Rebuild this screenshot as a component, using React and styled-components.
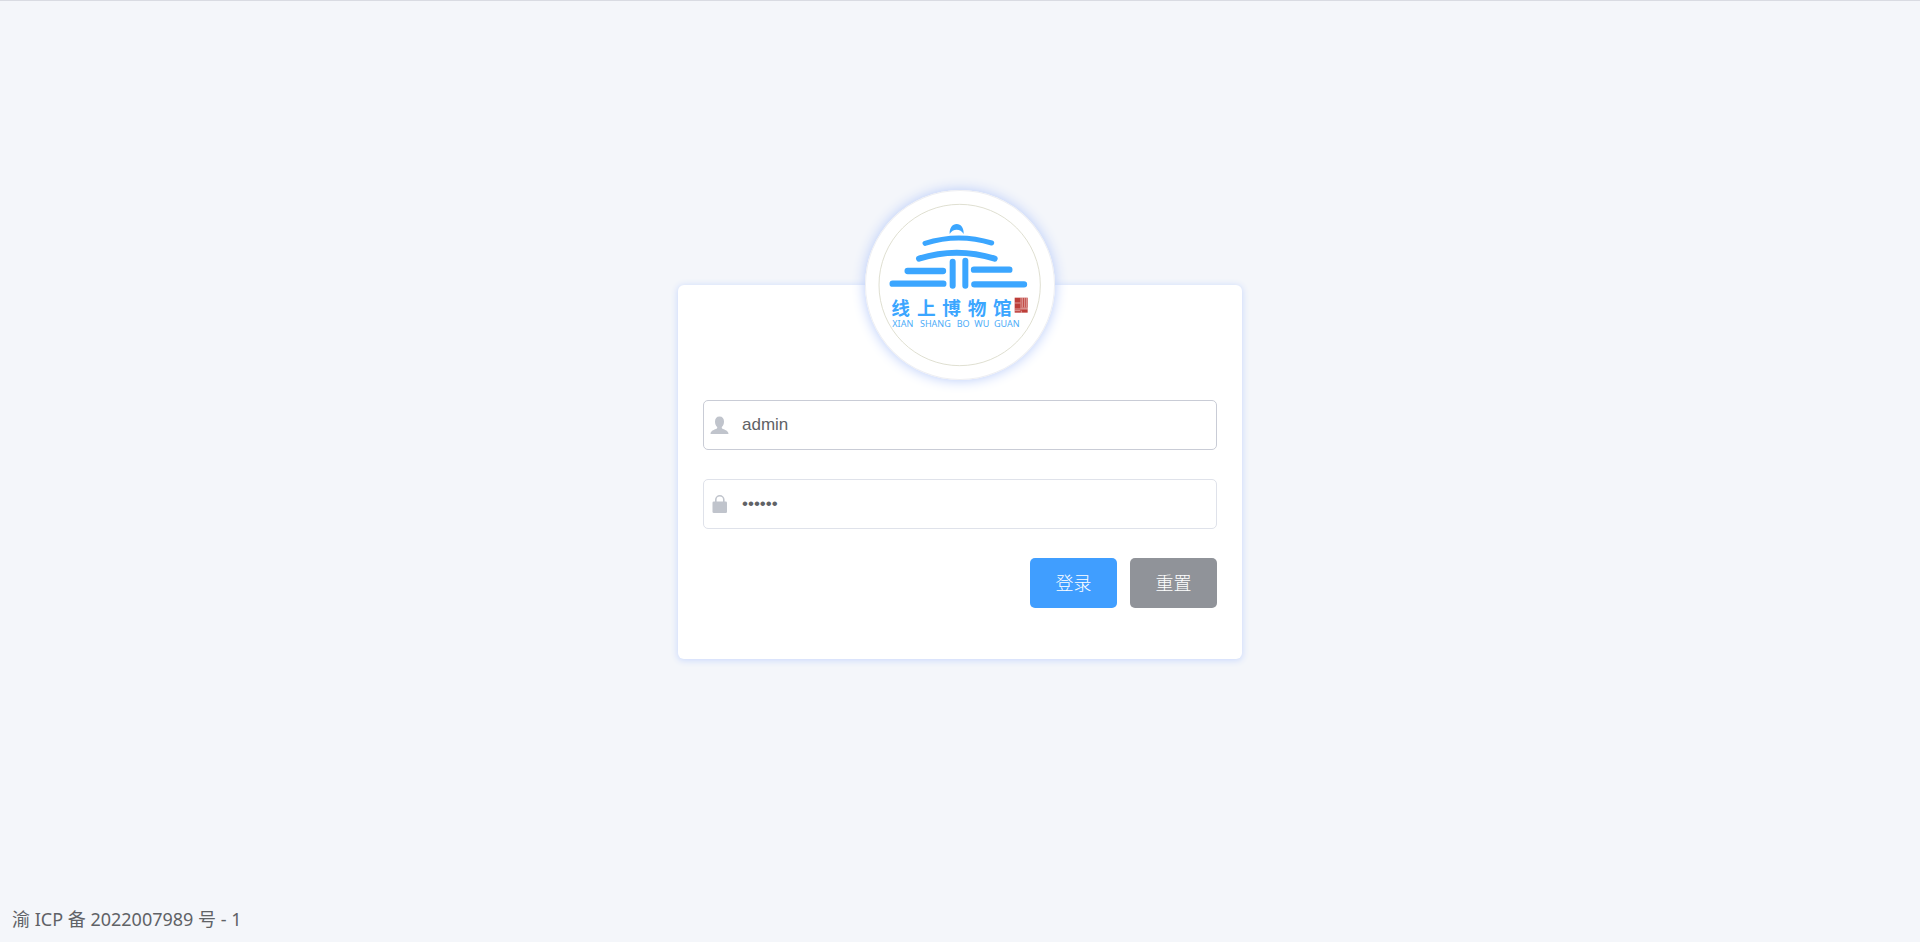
import React, { useState } from 'react';
import styled, { createGlobalStyle } from 'styled-components';

const GlobalStyle = createGlobalStyle`
  *, *::before, *::after { box-sizing: border-box; }
  body {
    margin: 0;
    background: #f4f6fa;
    color: #606266;
    font-family: "Noto Sans", "Noto Sans CJK SC", sans-serif;
    font-size: 18px;
  }
`;

const Page = styled.div`
  display: grid;
  grid-template-rows: 1fr auto 1fr;
  justify-items: center;
  min-height: 100vh;
  border-top: 1px solid #d9dbe2;
`;

const Card = styled.main`
  grid-row: 2;
  display: flex;
  flex-direction: column;
  width: 564px;
  max-width: 100%;
  padding: 0 25px 51px;
  border-radius: 6px;
  background: #fff;
  box-shadow: 0 1px 6px 1px #cfdcfc;
`;

const Avatar = styled.div`
  align-self: center;
  width: 190px;
  height: 190px;
  margin: -95px 0 20px;
  border-radius: 50%;
  background: #fff;
  box-shadow: 0 0 0 1px #eeeff3 inset, 0 0 13px #b5c9fa;
`;

const Logo = styled.svg`
  display: block;
  width: 100%;
  height: 100%;
`;

const LogoTitle = styled.text`
  fill: #3ba6ff;
  font: 700 56px "Noto Sans CJK SC", sans-serif;
`;

const LogoPinyin = styled.text`
  fill: #4dacf8;
  font: 400 27px "Noto Sans", sans-serif;
`;

const Form = styled.form`
  display: flex;
  flex-direction: column;
  gap: 29px;
`;

const Field = styled.label`
  display: flex;
  align-items: center;
  gap: 13px;
  height: 50px;
  padding: 0 6px;
  border: 1px solid ${({ $active }) => ($active ? '#c9ccd6' : '#dfe2ea')};
  border-radius: 5px;
  background: #fff;
`;

const FieldIcon = styled.svg`
  flex: none;
  width: 19px;
  height: 20px;
  fill: #c0c4cc;
`;

const Input = styled.input`
  flex: 1;
  min-width: 0;
  height: 100%;
  padding: 1px 0 0;
  border: 0;
  outline: 0;
  background: transparent;
  color: #606266;
  font: 17px "Liberation Sans", Arial, sans-serif;
`;

const Actions = styled.div`
  display: flex;
  justify-content: flex-end;
  gap: 13px;
`;

const Button = styled.button`
  width: 87px;
  height: 50px;
  padding: 0 0 2px;
  border: 0;
  border-radius: 5px;
  background: ${({ $tone }) => ($tone === 'primary' ? '#409eff' : '#909399')};
  color: #fff;
  font: 300 18px "Noto Sans CJK SC", sans-serif;
  cursor: pointer;
`;

const Footer = styled.footer`
  grid-row: 3;
  place-self: end start;
  padding: 0 12px 10px;
  line-height: 26px;
`;

const titleGlyphs = [
  ['线', 125],
  ['上', 202],
  ['博', 278],
  ['物', 354],
  ['馆', 430],
];

const pinyinWords = [
  ['XIAN', 128],
  ['SHANG', 211],
  ['BO', 321],
  ['WU', 374],
  ['GUAN', 433],
];

function MuseumLogo() {
  return (
    <Logo viewBox="46 43 570 570" role="img" aria-label="线上博物馆">
      <circle cx="330" cy="328" r="242" fill="none" stroke="#d8d9c8" strokeWidth="2.5" />
      <path d="M300 175 C299 157 308 145 321 145 C334 145 343 157 342 175 C333 158 309 158 300 175Z" fill="#3ba6ff" />
      <g fill="none" stroke="#3ba6ff" strokeLinecap="round">
        <path d="M226 203 Q326 171 426 202" strokeWidth="15" />
        <path d="M208 249 Q321 213 435 249" strokeWidth="18" />
        <path d="M309 258V330M347 255V330" strokeWidth="18" />
        <path d="M174 286H280M129 324H281M373 282H479M374 326H523" strokeWidth="19" />
      </g>
      {titleGlyphs.map(([glyph, x]) => (
        <LogoTitle key={glyph} x={x} y="417">{glyph}</LogoTitle>
      ))}
      {pinyinWords.map(([word, x]) => (
        <LogoPinyin key={word} x={x} y="455">{word}</LogoPinyin>
      ))}
      <path d="M495 366H534V411H495Z" fill="#bd3e39" />
      <path
        d="M514 366V399M495 382H512M495 400H534M495 405H512M519 366V395M525 366V395M530 366V395M516 397H534M515 405V411"
        fill="none"
        stroke="#fff"
        strokeWidth="1.500"
      />
    </Logo>
  );
}

export default function App() {
  const [username, setUsername] = useState('admin');
  const [password, setPassword] = useState('123456');

  const reset = () => {
    setUsername('admin');
    setPassword('123456');
  };

  return (
    <>
      <GlobalStyle />
      <Page>
        <Card>
          <Avatar>
            <MuseumLogo />
          </Avatar>
          <Form onSubmit={(event) => event.preventDefault()}>
            <Field $active>
              <FieldIcon viewBox="0 0 19 20" aria-hidden="true">
                <path d="M9.5 1.5C12.5 1.5 14 3.500 14 6.500C14 9 13.200 10.700 11.800 12V13C12 14.500 18.500 14.500 18.500 19H.5C.5 14.500 7 14.500 7.200 13V12C5.800 10.700 5 9 5 6.500C5 3.500 6.500 1.500 9.500 1.500Z" />
              </FieldIcon>
              <Input
                type="text"
                aria-label="用户名"
                autoComplete="username"
                value={username}
                onChange={(event) => setUsername(event.target.value)}
              />
            </Field>
            <Field>
              <FieldIcon viewBox="0 0 19 20" aria-hidden="true">
                <path d="M5.800 8.500V5.800A4 4 0 0 1 13.800 5.800V8.500" fill="none" stroke="#c0c4cc" strokeWidth="1.600" />
                <rect x="2.500" y="7.500" width="14.500" height="11.500" rx="1.300" />
              </FieldIcon>
              <Input
                type="password"
                aria-label="密码"
                autoComplete="current-password"
                value={password}
                onChange={(event) => setPassword(event.target.value)}
              />
            </Field>
            <Actions>
              <Button type="submit" $tone="primary">登录</Button>
              <Button type="button" $tone="info" onClick={reset}>重置</Button>
            </Actions>
          </Form>
        </Card>
        <Footer>渝 ICP 备 2022007989 号 - 1</Footer>
      </Page>
    </>
  );
}
